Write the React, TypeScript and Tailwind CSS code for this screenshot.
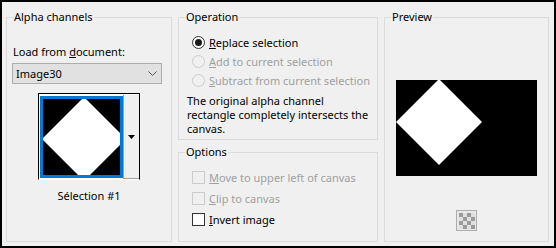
import React from "react";

function Radio({ checked, disabled, children }: { checked?: boolean; disabled?: boolean; children: React.ReactNode }) {
  return (
    <div className="flex items-center h-[19px] pl-[6px]">
      <span
        className={
          "w-[13px] h-[13px] rounded-full border flex items-center justify-center " +
          (disabled ? "border-[#cccccc] bg-[#f0f0f0]" : "border-[#333333] bg-white")
        }
      >
        {checked && <span className="w-[7px] h-[7px] rounded-full bg-[#1a1a1a]" />}
      </span>
      <span className={"ml-[4px] " + (disabled ? "text-[#a0a0a0]" : "text-black")}>{children}</span>
    </div>
  );
}

function Check({ disabled, children }: { disabled?: boolean; children: React.ReactNode }) {
  return (
    <div className="flex items-center h-[21px] pl-[6px]">
      <span
        className={
          "w-[13px] h-[13px] border " +
          (disabled ? "border-[#cccccc] bg-[#f0f0f0]" : "border-[#333333] bg-white")
        }
      />
      <span className={"ml-[4px] " + (disabled ? "text-[#a0a0a0]" : "text-black")}>{children}</span>
    </div>
  );
}

function Diamond({ w, h, cx, cy, r }: { w: number; h: number; cx: number; cy: number; r: number }) {
  return (
    <svg width={w} height={h} viewBox={`0 0 ${w} ${h}`} className="block">
      <rect width={w} height={h} fill="#000" />
      <polygon points={`${cx},${cy - r} ${cx + r},${cy} ${cx},${cy + r} ${cx - r},${cy}`} fill="#fff" />
    </svg>
  );
}

function Group({ title, className, children }: { title: string; className?: string; children: React.ReactNode }) {
  return (
    <fieldset className={"border border-[#dcdcdc] " + (className ?? "")}>
      <legend className="ml-[6px] px-[1px] leading-[16px]">{title}</legend>
      {children}
    </fieldset>
  );
}

export default function App() {
  return (
    <div
      className="w-[556px] h-[248px] border-2 border-black bg-[#f0f0f0] text-[11px] leading-[16px] text-black whitespace-nowrap flex gap-[6px] pl-[4px] pt-[7px]"
      style={{ fontFamily: '"Noto Sans", "Open Sans", sans-serif' }}
    >
      <Group title="Alpha channels" className="w-[166px] h-[233px] flex flex-col">
        <div className="mt-[19px] pl-[6px]">
          Load from <u>d</u>ocument:
        </div>
        <div className="mt-[3px] ml-[5px] w-[150px] h-[21px] border border-[#adadad] bg-[#e1e1e1] flex items-center justify-between pl-[3px] pr-[4px]">
          <span>Image30</span>
          <svg width="9" height="6" viewBox="0 0 9 6" fill="none">
            <path d="M0.5 0.5 L4.5 4.5 L8.5 0.5" stroke="#555" strokeWidth="1" />
          </svg>
        </div>
        <div className="mt-[9px] self-center w-[102px] h-[87px] border border-black border-b-white bg-white flex pt-[2px] pl-[1px]">
          <div className="w-[83px] h-[82px] border-[3px] border-[#0078d7] bg-black overflow-hidden">
            <Diamond w={77} h={76} cx={41} cy={40} r={42} />
          </div>
          <div className="flex-1 mt-[-1px] bg-[#f0f0f0] border-l border-b border-[#a0a0a0] flex items-center justify-center">
            <svg width="7" height="4" viewBox="0 0 7 4">
              <polygon points="0,0 7,0 3.5,4" fill="#000" />
            </svg>
          </div>
        </div>
        <div className="mt-[8px] text-center">Sélection #1</div>
      </Group>

      <div className="w-[200px] flex flex-col gap-[4px]">
        <Group title="Operation" className="h-[131px]">
          <div className="mt-[8px] pl-[7px]">
            <Radio checked>
              <u>R</u>eplace selection
            </Radio>
            <Radio disabled>
              <u>A</u>dd to current selection
            </Radio>
            <Radio disabled>
              <u>S</u>ubtract from current selection
            </Radio>
          </div>
          <div className="mt-[4px] pl-[8px] leading-[14px]">
            The original alpha channel
            <br />
            rectangle completely intersects the
            <br />
            canvas.
          </div>
        </Group>
        <Group title="Options" className="h-[98px]">
          <div className="mt-[7px] pl-[7px]">
            <Check disabled>
              <u>M</u>ove to upper left of canvas
            </Check>
            <Check disabled>
              <u>C</u>lip to canvas
            </Check>
            <Check>
              <u>I</u>nvert image
            </Check>
          </div>
        </Group>
      </div>

      <Group title="Preview" className="w-[165px] h-[233px] flex flex-col items-center">
        <div className="mt-[55px]">
          <Diamond w={141} h={96} cx={43} cy={42} r={43} />
        </div>
        <div className="mt-[34px] w-[21px] h-[21px] border border-[#adadad] bg-[#e8e8e8] flex items-center justify-center">
          <div className="grid grid-cols-4 w-[16px] h-[16px]">
            {Array.from({ length: 16 }).map((_, i) => (
              <span
                key={i}
                className={(Math.floor(i / 4) + (i % 4)) % 2 === 0 ? "bg-[#9a9a9a]" : "bg-[#e0e0e0]"}
              />
            ))}
          </div>
        </div>
      </Group>
    </div>
  );
}
